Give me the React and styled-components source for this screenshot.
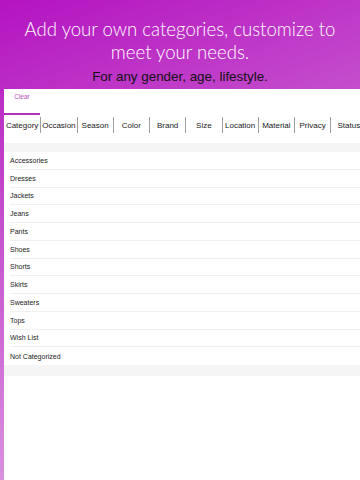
import React from 'react'
import styled, { createGlobalStyle } from 'styled-components'

const Global = createGlobalStyle`
  html, body {
    margin: 0;
    padding: 0;
  }
  body {
    width: 360px;
    height: 480px;
    overflow: hidden;
    font-family: "Liberation Sans", Arial, sans-serif;
  }
`

const Screen = styled.div`
  width: 360px;
  height: 480px;
  display: flex;
  flex-direction: column;
  background: linear-gradient(160deg, #b413c0 0%, #c44dcc 35%, #d582dc 70%, #e4b3ea 100%);
`

const Header = styled.header`
  height: 89px;
  display: flex;
  flex-direction: column;
  align-items: center;
  padding-top: 18px;
  box-sizing: border-box;
`

const Title = styled.h1`
  margin: 0;
  font-family: Lato, "Open Sans", sans-serif;
  font-weight: 300;
  font-size: 18.6px;
  line-height: 23px;
  color: #fff;
  text-align: center;
  width: 340px;
`

const Subtitle = styled.p`
  margin: 4px 0 0;
  font-size: 13.4px;
  line-height: 17px;
  color: #111;
`

const Panel = styled.main`
  flex: 1;
  margin-left: 4px;
  background: #fff;
  display: flex;
  flex-direction: column;
`

const Toolbar = styled.div`
  height: 26px;
  display: flex;
  align-items: flex-end;
`

const ClearTab = styled.button`
  width: 36px;
  height: 26px;
  border: none;
  border-bottom: 2px solid #b330ba;
  background: none;
  padding: 4px 0 0 0;
  display: flex;
  justify-content: center;
  align-items: flex-start;
  font-family: "Liberation Sans", Arial, sans-serif;
  font-size: 6.5px;
  color: #b94fc0;
`

const Tabs = styled.div`
  display: flex;
  height: 28px;
  padding-top: 2px;
  box-sizing: border-box;
  align-items: flex-start;
  overflow: hidden;
`

const Tab = styled.div`
  flex: 0 0 36.25px;
  height: 16px;
  display: flex;
  justify-content: center;
  align-items: center;
  white-space: nowrap;
  font-size: 8px;
  color: #1a1a1a;
  border-left: ${p => (p.$first ? 'none' : '1px solid #a0a0a0')};
  box-sizing: border-box;
`

const Gap = styled.div`
  height: ${p => p.$h}px;
  background: #f5f5f5;
`

const List = styled.ul`
  margin: 0;
  padding: 0;
  list-style: none;
`

const Row = styled.li`
  height: 17.75px;
  margin-left: 6px;
  display: flex;
  align-items: center;
  font-size: 7px;
  color: #222;
  border-bottom: ${p => (p.$last ? 'none' : '1px solid #f0f0f0')};
  box-sizing: border-box;
`

const tabs = ['Category', 'Occasion', 'Season', 'Color', 'Brand', 'Size', 'Location', 'Material', 'Privacy', 'Status']

const categories = [
  'Accessories', 'Dresses', 'Jackets', 'Jeans', 'Pants', 'Shoes',
  'Shorts', 'Skirts', 'Sweaters', 'Tops', 'Wish List', 'Not Categorized'
]

export default function App() {
  return (
    <Screen>
      <Global />
      <Header>
        <Title>Add your own categories, customize to meet your needs.</Title>
        <Subtitle>For any gender, age, lifestyle.</Subtitle>
      </Header>
      <Panel>
        <Toolbar>
          <ClearTab>Clear</ClearTab>
        </Toolbar>
        <Tabs>
          {tabs.map((t, i) => (
            <Tab key={t} $first={i === 0}>{t}</Tab>
          ))}
        </Tabs>
        <Gap $h={9} />
        <List>
          {categories.map((c, i) => (
            <Row key={c} $last={i === categories.length - 1}>{c}</Row>
          ))}
        </List>
        <Gap $h={11} />
      </Panel>
    </Screen>
  )
}
